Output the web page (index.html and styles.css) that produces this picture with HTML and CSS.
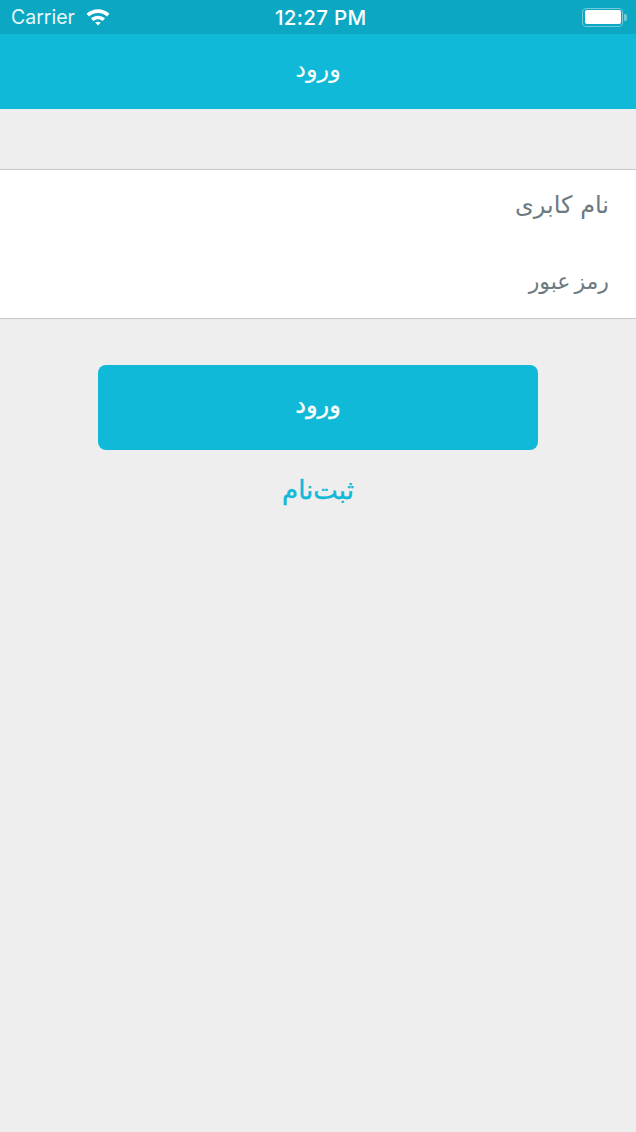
FILE: index.html
```html
<!DOCTYPE html>
<html lang="fa">
<head>
    <meta charset="UTF-8">
    <meta name="viewport" content="width=device-width, initial-scale=1.0">
    <title>ورود</title>
    <link rel="stylesheet" href="styles.css">
</head>
<body>
    <div class="status-bar">
        <div class="status-left">
            <span class="carrier">Carrier</span>
            <svg class="wifi" width="24" height="18" viewBox="0 0 24 18">
                <path d="M0.5 5.8 C7 -0.2 17 -0.2 23.5 5.8 L21 8.4 C15.8 3.8 8.2 3.8 3 8.4 Z" fill="#fff"/>
                <path d="M5 10.4 C9 6.8 15 6.8 19 10.4 L16.5 12.9 C13.7 10.7 10.3 10.7 7.5 12.9 Z" fill="#fff"/>
                <path d="M9.2 14.6 C10.9 13.3 13.1 13.3 14.8 14.6 L12 17.6 Z" fill="#fff"/>
            </svg>
        </div>
        <span class="clock">12:27 PM</span>
        <div class="battery">
            <div class="battery-body"><div class="battery-fill"></div></div>
            <div class="battery-cap"></div>
        </div>
    </div>

    <header class="nav-bar">ورود</header>

    <form class="login-form">
        <div class="fields">
            <div class="field field-user">نام کابری</div>
            <div class="field field-pass">رمز عبور</div>
        </div>
        <button type="button" class="login-button">ورود</button>
        <a class="signup-link">ثبت‌نام</a>
    </form>
</body>
</html>
```

FILE: styles.css
```css
* {
    margin: 0;
    padding: 0;
    box-sizing: border-box;
    font-family: "DejaVu Sans", sans-serif;
}

body {
    background-color: #eeeeee;
    width: 636px;
    min-height: 1132px;
}

.status-bar {
    height: 34px;
    background-color: #0ca8c3;
    color: white;
    display: flex;
    align-items: center;
    justify-content: space-between;
    padding: 0 9px 0 11px;
    position: relative;
}

.status-left {
    display: flex;
    align-items: center;
    gap: 11px;
}

.carrier {
    font-family: Inter, sans-serif;
    font-size: 19.5px;
    color: #e6f6f9;
}

.wifi {
    display: block;
}

.clock {
    font-family: Inter, sans-serif;
    font-size: 20.5px;
    font-weight: 500;
    letter-spacing: 0.3px;
    position: absolute;
    left: 275px;
}

.battery {
    display: flex;
    align-items: center;
}

.battery-body {
    width: 41px;
    height: 19px;
    border: 1.5px solid #6fcbdb;
    border-radius: 4px;
    padding: 1.5px;
}

.battery-fill {
    width: 100%;
    height: 100%;
    background-color: white;
    border-radius: 2px;
}

.battery-cap {
    width: 3px;
    height: 7px;
    background-color: #6fcbdb;
    border-radius: 0 2px 2px 0;
    margin-left: 1px;
}

.nav-bar {
    height: 75px;
    background-color: #10b9d8;
    color: white;
    display: flex;
    align-items: center;
    justify-content: center;
    font-size: 24px;
    padding-bottom: 5px;
}

.login-form {
    display: flex;
    flex-direction: column;
    align-items: center;
    padding-top: 60px;
}

.fields {
    width: 100%;
    height: 150px;
    background-color: white;
    border-top: 1px solid #c8c8c8;
    border-bottom: 1px solid #c8c8c8;
    display: flex;
    flex-direction: column;
}

.field {
    height: 74px;
    display: flex;
    align-items: center;
    direction: rtl;
    padding-right: 27px;
    font-size: 24px;
    color: #6c7a80;
}

.field-user {
    padding-bottom: 4px;
}

.field-pass {
    font-size: 22px;
    word-spacing: -3px;
}

.login-button {
    width: 440px;
    height: 85px;
    margin-top: 46px;
    padding-bottom: 6px;
    background-color: #10b9d8;
    color: white;
    border: none;
    border-radius: 8px;
    font-size: 24px;
    -webkit-text-stroke: 0.3px white;
}

.signup-link {
    margin-top: 25px;
    font-size: 26px;
    color: #10b9d8;
    -webkit-text-stroke: 0.4px #10b9d8;
}
```
